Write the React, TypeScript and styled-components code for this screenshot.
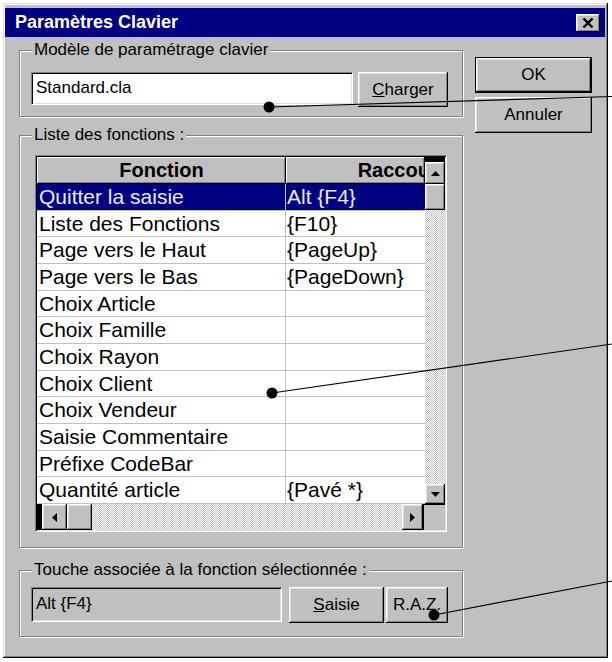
import { Fragment } from 'react';
import styled, { createGlobalStyle, css } from 'styled-components';

const GlobalStyle = createGlobalStyle`
  html, body {
    margin: 0;
    padding: 0;
    background: #fff;
  }
  body {
    font-family: "Liberation Sans", Arial, sans-serif;
    color: #000;
  }
`;

const raised = css`
  background: #c0c0c0;
  box-shadow: inset -1px -1px #000, inset 1px 1px #fff, inset -2px -2px #808080,
    inset 2px 2px #dfdfdf;
`;

const sunken = css`
  border: 1px solid;
  border-color: #808080 #fff #fff #808080;
  box-shadow: inset 1px 1px #000, inset -1px -1px #dfdfdf;
`;

const dither = css`
  background-color: #fff;
  background-image: repeating-conic-gradient(#c0c0c0 0 25%, #fff 0 50%);
  background-size: 2px 2px;
`;

const Page = styled.div`
  position: relative;
  width: 612px;
  height: 662px;
  padding: 3px 0 0 3px;
  box-sizing: border-box;
  overflow: hidden;
`;

const Window = styled.div`
  width: 605px;
  height: 655px;
  box-sizing: border-box;
  padding: 5px 3px 3px 2px;
  background: #c0c0c0;
  box-shadow: inset -1px -1px #000, inset 1px 1px #dfdfdf, inset -2px -2px #808080,
    inset 2px 2px #fff;
`;

const TitleBar = styled.div`
  height: 29px;
  background: #000080;
  display: flex;
  align-items: center;
  justify-content: space-between;
  padding: 0 5px 0 10px;
`;

const TitleText = styled.span`
  color: #fff;
  font-weight: bold;
  font-size: 18px;
`;

const CloseButton = styled.div`
  width: 24px;
  height: 18px;
  display: flex;
  align-items: center;
  justify-content: center;
  ${raised}
`;

const Body = styled.div`
  display: flex;
  align-items: flex-start;
`;

const LeftCol = styled.div`
  width: 444px;
  margin-left: 14px;
  display: flex;
  flex-direction: column;
`;

const RightCol = styled.div`
  width: 117px;
  margin-left: 12px;
  padding-top: 20px;
  display: flex;
  flex-direction: column;
  gap: 4px;
`;

const Group = styled.fieldset<{ $mt: number }>`
  margin: ${(p) => p.$mt}px 0 0;
  padding: 0;
  min-width: 0;
  border: 1px solid #808080;
  box-shadow: inset 1px 1px #fff, 1px 1px #fff;
`;

const Legend = styled.legend`
  margin-left: 12px;
  padding: 0 2px;
  font-size: 17px;
  line-height: 18px;
  background: #c0c0c0;
`;

const GroupBody = styled.div<{ $pad: string }>`
  padding: ${(p) => p.$pad};
  display: flex;
  align-items: flex-start;
`;

const TextField = styled.div<{ $w: number; $h: number; $bg: string }>`
  width: ${(p) => p.$w}px;
  height: ${(p) => p.$h}px;
  box-sizing: border-box;
  background: ${(p) => p.$bg};
  ${sunken}
  font-size: 17px;
  line-height: ${(p) => p.$h - 6}px;
  padding: 1px 4px;
  white-space: nowrap;
`;

const Button = styled.div<{ $w: number; $h?: number; $ml?: number; $default?: boolean }>`
  width: ${(p) => p.$w}px;
  height: ${(p) => p.$h ?? 36}px;
  margin-left: ${(p) => p.$ml ?? 0}px;
  box-sizing: border-box;
  display: flex;
  align-items: center;
  justify-content: center;
  font-size: 17px;
  border: ${(p) => (p.$default ? '1px solid #000' : 'none')};
  ${raised}
`;

const GridFrame = styled.div`
  width: 412px;
  height: 377px;
  box-sizing: border-box;
  ${sunken}
  padding: 1px;
  display: flex;
  flex-direction: column;
`;

const GridMain = styled.div`
  display: flex;
  height: 347px;
`;

const Table = styled.div`
  display: grid;
  grid-template-columns: 249px 139px;
  grid-template-rows: 27px repeat(12, 1fr);
  width: 388px;
  background: #fff;
`;

const HeadCell = styled.div`
  ${raised}
  box-shadow: inset -1px -1px #000, inset 1px 1px #fff, inset -2px -2px #808080;
  font-weight: bold;
  font-size: 20px;
  line-height: 27px;
  overflow: hidden;
  display: flex;
`;

const HeadLabel = styled.span<{ $w: number }>`
  flex: 0 0 ${(p) => p.$w}px;
  text-align: center;
`;

const Cell = styled.div<{ $sel?: boolean; $first?: boolean }>`
  font-size: 21px;
  line-height: 25px;
  white-space: nowrap;
  overflow: hidden;
  padding-left: ${(p) => (p.$first ? 2 : 1)}px;
  border-bottom: 1px solid #c0c0c0;
  border-right: ${(p) => (p.$first ? '1px solid #c0c0c0' : 'none')};
  background: ${(p) => (p.$sel ? '#000080' : '#fff')};
  color: ${(p) => (p.$sel ? '#ecebfa' : '#000')};
`;

const VScroll = styled.div`
  width: 20px;
  display: flex;
  flex-direction: column;
`;

const Cap = styled.div<{ $w?: number; $h?: number }>`
  flex: 0 0 auto;
  width: ${(p) => (p.$w ? `${p.$w}px` : 'auto')};
  height: ${(p) => (p.$h ? `${p.$h}px` : 'auto')};
  background: #000;
`;

const ScrollBtn = styled.div<{ $w?: number; $h?: number }>`
  flex: 0 0 auto;
  width: ${(p) => (p.$w ? `${p.$w}px` : 'auto')};
  height: ${(p) => (p.$h ? `${p.$h}px` : 'auto')};
  display: flex;
  align-items: center;
  justify-content: center;
  ${raised}
`;

const Track = styled.div`
  flex: 1;
  ${dither}
`;

const HScroll = styled.div`
  height: 26px;
  display: flex;
`;

const Corner = styled.div`
  width: 22px;
  background: #c0c0c0;
  border-top: 1px solid #000;
  border-left: 1px solid #000;
  box-sizing: border-box;
`;

const Overlay = styled.svg`
  position: absolute;
  left: 0;
  top: 0;
  pointer-events: none;
`;

const rows: [string, string][] = [
  ['Quitter la saisie', 'Alt {F4}'],
  ['Liste des Fonctions', '{F10}'],
  ['Page vers le Haut', '{PageUp}'],
  ['Page vers le Bas', '{PageDown}'],
  ['Choix Article', ''],
  ['Choix Famille', ''],
  ['Choix Rayon', ''],
  ['Choix Client', ''],
  ['Choix Vendeur', ''],
  ['Saisie Commentaire', ''],
  ['Préfixe CodeBar', ''],
  ['Quantité article', '{Pavé *}'],
];

const Arrow = ({ dir }: { dir: 'up' | 'down' | 'left' | 'right' }) => {
  const pts = {
    up: '0,5 9,5 4.5,0',
    down: '0,0 9,0 4.5,5',
    left: '5,0 5,9 0,4.5',
    right: '0,0 0,9 5,4.5',
  }[dir];
  const vertical = dir === 'up' || dir === 'down';
  return (
    <svg width={vertical ? 9 : 5} height={vertical ? 5 : 9}>
      <polygon points={pts} fill="#000" />
    </svg>
  );
};

// annotation dots and their leader lines running off to the right edge
const callouts = [
  { x: 269, y: 107, ex: 612, ey: 96.5 },
  { x: 272, y: 393, ex: 612, ey: 344 },
  { x: 434, y: 615, ex: 612, ey: 581 },
];

export default function App() {
  return (
    <Page>
      <GlobalStyle />
      <Window>
        <TitleBar>
          <TitleText>Paramètres Clavier</TitleText>
          <CloseButton>
            <svg width="12" height="10" viewBox="0 0 12 10">
              <path d="M1.5 0.5 L10.5 9.5 M10.5 0.5 L1.5 9.5" stroke="#000" strokeWidth="2.4" />
            </svg>
          </CloseButton>
        </TitleBar>
        <Body>
          <LeftCol>
            <Group $mt={4}>
              <Legend>Modèle de paramétrage clavier</Legend>
              <GroupBody $pad="13px 14px 9px 11px">
                <TextField $w={322} $h={33} $bg="#fff">
                  Standard.cla
                </TextField>
                <Button $w={90} $h={35} $ml={5}>
                  <span>
                    <u>C</u>harger
                  </span>
                </Button>
              </GroupBody>
            </Group>

            <Group $mt={9}>
              <Legend>Liste des fonctions :</Legend>
              <GroupBody $pad="11px 15px 15px 15px">
                <GridFrame>
                  <GridMain>
                    <Table>
                      <HeadCell>
                        <HeadLabel $w={249}>Fonction</HeadLabel>
                      </HeadCell>
                      <HeadCell>
                        <HeadLabel $w={240}>Raccourci</HeadLabel>
                      </HeadCell>
                      {rows.map(([fn, key], i) => (
                        <Fragment key={fn}>
                          <Cell $first $sel={i === 0}>
                            {fn}
                          </Cell>
                          <Cell $sel={i === 0}>{key}</Cell>
                        </Fragment>
                      ))}
                    </Table>
                    <VScroll>
                      <Cap $h={5} />
                      <ScrollBtn $h={22}>
                        <Arrow dir="up" />
                      </ScrollBtn>
                      <ScrollBtn $h={26} />
                      <Track />
                      <ScrollBtn $h={20}>
                        <Arrow dir="down" />
                      </ScrollBtn>
                    </VScroll>
                  </GridMain>
                  <HScroll>
                    <Cap $w={5} />
                    <ScrollBtn $w={25}>
                      <Arrow dir="left" />
                    </ScrollBtn>
                    <ScrollBtn $w={25} />
                    <Track />
                    <ScrollBtn $w={21}>
                      <Arrow dir="right" />
                    </ScrollBtn>
                    <Corner />
                  </HScroll>
                </GridFrame>
              </GroupBody>
            </Group>

            <Group $mt={13}>
              <Legend>Touche associée à la fonction sélectionnée :</Legend>
              <GroupBody $pad="8px 14px 13px 11px">
                <TextField $w={251} $h={35} $bg="#c0c0c0">
                  Alt {'{F4}'}
                </TextField>
                <Button $w={95} $ml={7}>
                  <span>
                    <u>S</u>aisie
                  </span>
                </Button>
                <Button $w={62} $ml={2}>
                  R.A.Z.
                </Button>
              </GroupBody>
            </Group>
          </LeftCol>
          <RightCol>
            <Button $w={117} $default>
              OK
            </Button>
            <Button $w={117}>Annuler</Button>
          </RightCol>
        </Body>
      </Window>
      <Overlay width="612" height="662">
        {callouts.map((c) => (
          <g key={c.y}>
            <line x1={c.x} y1={c.y} x2={c.ex} y2={c.ey} stroke="#000" strokeWidth="1.2" />
            <circle cx={c.x} cy={c.y} r="5.5" fill="#000" />
          </g>
        ))}
      </Overlay>
    </Page>
  );
}
